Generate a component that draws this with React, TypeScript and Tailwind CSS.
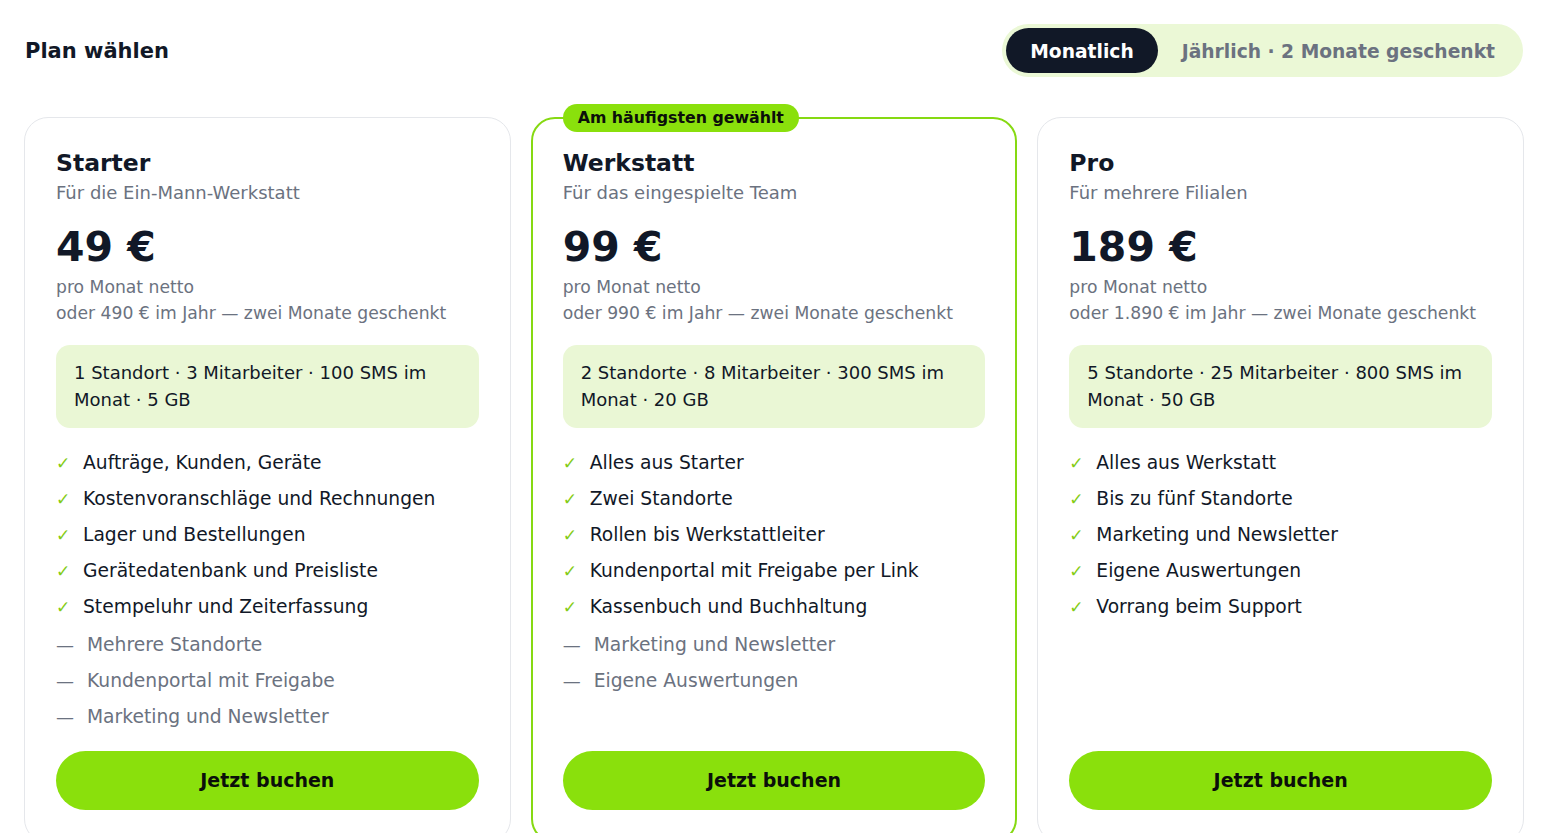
import React from "react";

type Plan = {
  name: string;
  subtitle: string;
  price: string;
  yearly: string;
  limits: string;
  included: string[];
  excluded: string[];
  featured?: boolean;
};

const plans: Plan[] = [
  {
    name: "Starter",
    subtitle: "Für die Ein-Mann-Werkstatt",
    price: "49 €",
    yearly: "oder 490 € im Jahr — zwei Monate geschenkt",
    limits: "1 Standort · 3 Mitarbeiter · 100 SMS im Monat · 5 GB",
    included: [
      "Aufträge, Kunden, Geräte",
      "Kostenvoranschläge und Rechnungen",
      "Lager und Bestellungen",
      "Gerätedatenbank und Preisliste",
      "Stempeluhr und Zeiterfassung",
    ],
    excluded: ["Mehrere Standorte", "Kundenportal mit Freigabe", "Marketing und Newsletter"],
  },
  {
    name: "Werkstatt",
    subtitle: "Für das eingespielte Team",
    price: "99 €",
    yearly: "oder 990 € im Jahr — zwei Monate geschenkt",
    limits: "2 Standorte · 8 Mitarbeiter · 300 SMS im Monat · 20 GB",
    included: [
      "Alles aus Starter",
      "Zwei Standorte",
      "Rollen bis Werkstattleiter",
      "Kundenportal mit Freigabe per Link",
      "Kassenbuch und Buchhaltung",
    ],
    excluded: ["Marketing und Newsletter", "Eigene Auswertungen"],
    featured: true,
  },
  {
    name: "Pro",
    subtitle: "Für mehrere Filialen",
    price: "189 €",
    yearly: "oder 1.890 € im Jahr — zwei Monate geschenkt",
    limits: "5 Standorte · 25 Mitarbeiter · 800 SMS im Monat · 50 GB",
    included: [
      "Alles aus Werkstatt",
      "Bis zu fünf Standorte",
      "Marketing und Newsletter",
      "Eigene Auswertungen",
      "Vorrang beim Support",
    ],
    excluded: [],
  },
];

function Card({ plan }: { plan: Plan }) {
  return (
    <div
      className={
        plan.featured
          ? "relative flex flex-col rounded-[24px] border-2 border-[#86d912] bg-white px-[30px] pt-[32px] pb-[31px]"
          : "relative flex flex-col rounded-[24px] border border-[#e5e7eb] bg-white px-[31px] pt-[33px] pb-8"
      }
    >
      {plan.featured && (
        <div className="absolute left-[30px] top-[-15px] flex h-[28px] items-center rounded-full bg-[#8ae00c] px-[15px] text-[15.8px] font-bold text-[#0b0f0a]">
          Am häufigsten gewählt
        </div>
      )}
      <div className="text-[23.5px] font-bold leading-[24px] text-[#111827]">{plan.name}</div>
      <div className="mt-[6px] text-[18px] leading-[24px] text-[#6b7280]">{plan.subtitle}</div>
      <div className="mt-[22px] text-[41px] font-bold leading-[41px] text-[#111827]">{plan.price}</div>
      <div className="mt-[6px] text-[17.2px] leading-[26px] text-[#6b7280]">pro Monat netto</div>
      <div className="text-[17.2px] leading-[26px] text-[#6b7280]">{plan.yearly}</div>
      <div className="mt-[19px] rounded-[14px] bg-[#eaf7d5] px-[18px] pt-[14px] pb-[15px] text-[18px] leading-[27px] text-[#111827]">
        {plan.limits}
      </div>
      <ul className="mt-[21px] flex flex-1 flex-col">
        {plan.included.map((f) => (
          <li key={f} className="mb-2 flex items-center text-[18.7px] leading-[28px] text-[#111827]">
            <span className="w-[27px] shrink-0 text-[17px] text-[#84cc16]">✓</span>
            <span>{f}</span>
          </li>
        ))}
        {plan.excluded.map((f, i) => (
          <li
            key={f}
            className={
              i === 0
                ? "mt-[2px] mb-2 flex items-center text-[18.7px] leading-[28px] text-[#6b7280]"
                : "mb-2 flex items-center text-[18.7px] leading-[28px] text-[#6b7280]"
            }
          >
            <span className="w-[31px] shrink-0 text-[18px]">—</span>
            <span>{f}</span>
          </li>
        ))}
      </ul>
      <button className="mt-[12px] flex h-[59px] w-full items-center justify-center rounded-full bg-[#8ae00c] text-[19px] font-bold text-[#0b0f0a]">
        Jetzt buchen
      </button>
    </div>
  );
}

export default function App() {
  return (
    <div className="min-h-screen bg-white px-6 pt-6 pb-10 font-['DejaVu_Sans',sans-serif]">
      <div className="flex items-center justify-between">
        <h1 className="pl-px pt-[2px] text-[21px] font-bold text-[#111827]">Plan wählen</h1>
        <div className="mr-px flex items-center rounded-full bg-[#ebf8d6] p-1">
          <button className="flex h-[45px] items-center rounded-full bg-[#111827] px-6 pt-[3px] text-[18.7px] font-bold text-white">
            Monatlich
          </button>
          <button className="flex h-[45px] items-center rounded-full px-6 pt-[3px] text-[18.7px] font-bold text-[#6b7280]">
            Jährlich · 2 Monate geschenkt
          </button>
        </div>
      </div>
      <div className="mt-10 grid grid-cols-3 gap-5">
        {plans.map((p) => (
          <Card key={p.name} plan={p} />
        ))}
      </div>
    </div>
  );
}
